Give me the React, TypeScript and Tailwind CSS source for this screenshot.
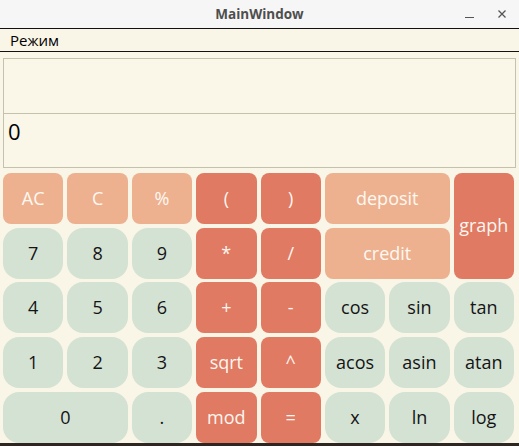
const keys: { label: string; kind: 'soft' | 'op' | 'num'; span?: string }[] = [
  { label: 'AC', kind: 'soft' },
  { label: 'C', kind: 'soft' },
  { label: '%', kind: 'soft' },
  { label: '(', kind: 'op' },
  { label: ')', kind: 'op' },
  { label: 'deposit', kind: 'soft', span: 'col-span-2' },
  { label: 'graph', kind: 'op', span: 'row-span-2' },
  { label: '7', kind: 'num' },
  { label: '8', kind: 'num' },
  { label: '9', kind: 'num' },
  { label: '*', kind: 'op' },
  { label: '/', kind: 'op' },
  { label: 'credit', kind: 'soft', span: 'col-span-2' },
  { label: '4', kind: 'num' },
  { label: '5', kind: 'num' },
  { label: '6', kind: 'num' },
  { label: '+', kind: 'op' },
  { label: '-', kind: 'op' },
  { label: 'cos', kind: 'num' },
  { label: 'sin', kind: 'num' },
  { label: 'tan', kind: 'num' },
  { label: '1', kind: 'num' },
  { label: '2', kind: 'num' },
  { label: '3', kind: 'num' },
  { label: 'sqrt', kind: 'op' },
  { label: '^', kind: 'op' },
  { label: 'acos', kind: 'num' },
  { label: 'asin', kind: 'num' },
  { label: 'atan', kind: 'num' },
  { label: '0', kind: 'num', span: 'col-span-2' },
  { label: '.', kind: 'num' },
  { label: 'mod', kind: 'op' },
  { label: '=', kind: 'op' },
  { label: 'x', kind: 'num' },
  { label: 'ln', kind: 'num' },
  { label: 'log', kind: 'num' },
];

const kindClass = {
  soft: 'bg-[#edb190] text-[#fdf8f0] rounded-[8px]',
  op: 'bg-[#e07a62] text-[#fdf6f0] rounded-[8px]',
  num: 'bg-[#d4e2d4] text-[#141414] rounded-[16px]',
};

export default function App() {
  return (
    <div className="w-[519px] h-[446px] flex flex-col bg-[#faf6e7] font-['Open_Sans',sans-serif] overflow-hidden">
      {/* title bar */}
      <div className="h-[28px] shrink-0 bg-[#f6f6f6] flex items-center relative">
        <div className="flex-1 text-center text-[13.5px] font-bold text-[#4e4e4e]">MainWindow</div>
        <div className="absolute right-[12px] top-0 h-full flex items-center gap-[23px] text-[#555]">
          <div className="w-[9px] h-[1px] bg-[#555] mt-[6px]" />
          <svg width="10" height="10" viewBox="0 0 10 10" className="mb-[1px]">
            <path d="M1.5 1.5 L8.5 8.5 M8.5 1.5 L1.5 8.5" stroke="#555" strokeWidth="1.3" />
          </svg>
        </div>
      </div>

      {/* menu */}
      <div className="h-[24px] shrink-0 border-y border-[#111] flex items-center px-[10px] text-[15px] text-black">
        Режим
      </div>

      <div className="flex-1 flex flex-col px-[3px] pt-[6px]">
        {/* display */}
        <div className="h-[110px] shrink-0 border border-[#c4c1ac] flex flex-col bg-[#faf7e8]">
          <div className="h-[55px] border-b border-[#c4c1ac]" />
          <div className="flex-1 px-[4px] pt-[2px] text-[22px] text-black leading-[30px]">0</div>
        </div>

        {/* keypad */}
        <div className="mt-[5px] grid grid-cols-8 grid-rows-[repeat(5,51px)] gap-x-[4px] gap-y-[3.7px] pr-[2px]">
          {keys.map((k) => (
            <button
              key={k.label}
              className={`${kindClass[k.kind]} ${k.span ?? ''} flex items-center justify-center text-[18px]`}
            >
              {k.label}
            </button>
          ))}
        </div>
      </div>

      <div className="h-[3px] shrink-0 bg-[#2e2622]" />
    </div>
  );
}
